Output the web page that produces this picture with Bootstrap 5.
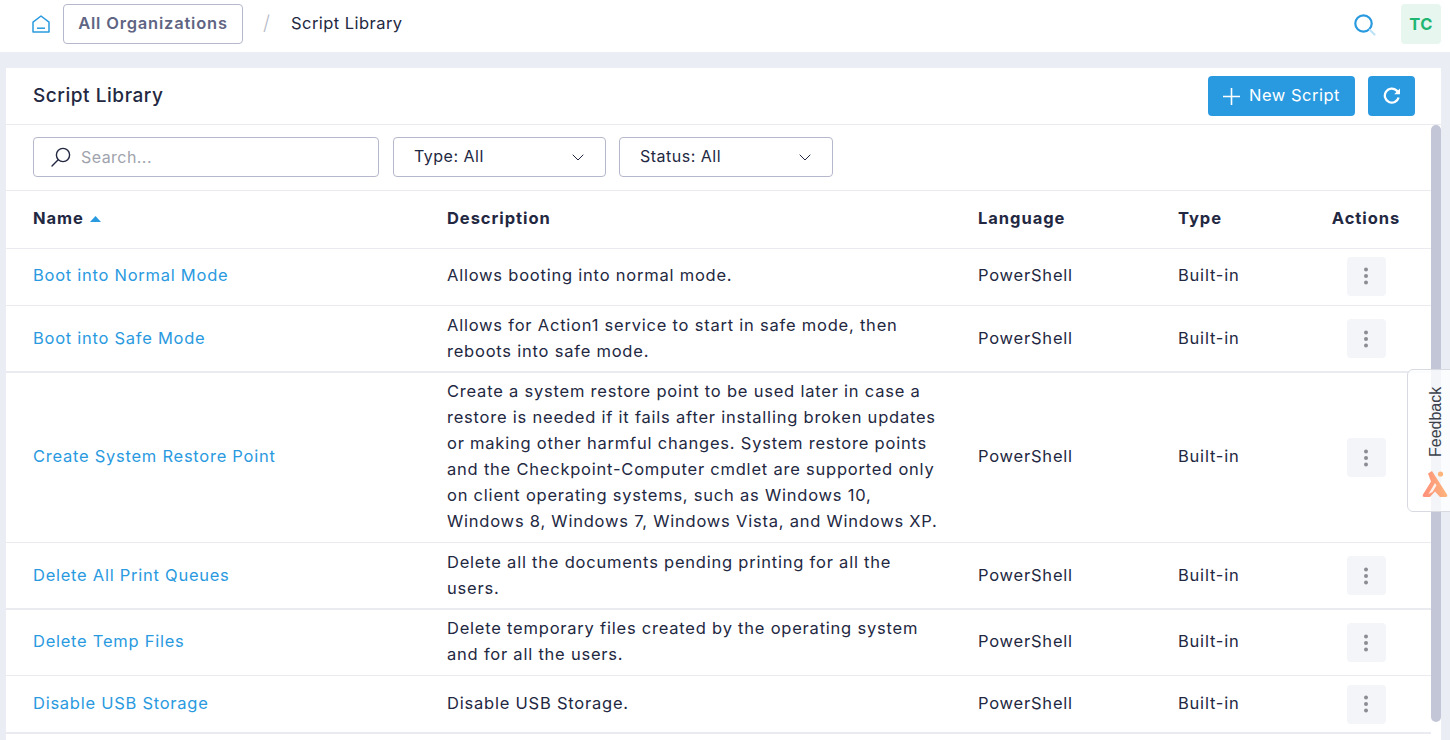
<!DOCTYPE html>
<html lang="en">
<head>
<meta charset="utf-8">
<title>Script Library</title>
<link href="https://cdn.jsdelivr.net/npm/bootstrap@5.3.0/dist/css/bootstrap.min.css" rel="stylesheet">
<style>
html,body{height:740px;overflow:hidden}
body{background:#eaedf3;font-family:Inter,"Liberation Sans",sans-serif;font-size:15.5px;color:#232842;position:relative}
.topbar{height:52px;background:#fff;padding:4px 9px 8px 32px}
.org-box{width:180px;height:40px;border:1px solid #b5b8cc;border-radius:4px;color:#5f6583;font-weight:600;font-size:16.5px;background:#fff;margin-left:13px;letter-spacing:.8px;padding-bottom:2px}
.crumb-sep{color:#b9bcc8;font-size:20px;margin:0 21px 0 20px;font-weight:300;padding-bottom:2px}
.crumb-now{font-size:16.5px;letter-spacing:.45px;padding-bottom:2px}
.avatar-box{width:40px;height:40px;border-radius:4px;background:#e7f6ee;color:#1fb573;font-weight:700;font-size:16.5px;margin-left:25px;letter-spacing:.5px}
.panel{margin:16px 9px 0 6px;background:#fff;height:672px;display:flex;flex-direction:column;position:relative}
.panel-head{height:57px;border-bottom:1px solid #e9ebf0;padding:8px 26px 8px 27px}
.panel-title{font-size:19px;font-weight:500;margin:0;letter-spacing:.55px}
.blue-btn{height:40px;background:#2a9ae0;border:0;border-radius:4px;color:#fff;font-size:16.5px;display:inline-flex;align-items:center;justify-content:center;padding:0;letter-spacing:.5px}
.blue-btn:hover{background:#2a9ae0;color:#fff}
.new-btn{width:147px;gap:9px;margin-right:13px;padding-bottom:2px}
.new-btn svg{margin-top:2px}
.refresh-btn{width:47px}
.scroller{flex:1;overflow-y:hidden;min-height:0}
.thumb-bar{position:absolute;left:1425px;top:57px;width:10px;height:597px;background:#c3c6d7;border-radius:5px;z-index:2}
.filters{height:66px;border-bottom:1px solid #e9ebf0;padding:12px 0 0 27px;gap:14px}
.search-box{width:346px;height:40px;border:1px solid #b5b8cc;border-radius:4px;padding-left:17px;gap:10px}
.search-box input{border:0;outline:0;padding:0;width:270px;font-size:16px;background:transparent;box-shadow:none;letter-spacing:.45px}
.search-box input::placeholder{color:#a0a3ad}
.pick-box{height:40px;border:1px solid #b5b8cc;border-radius:4px;padding:0 21px 2px 20px;font-size:16px;color:#232842;background:#fff;display:flex;align-items:center;justify-content:space-between;letter-spacing:.5px}
.pick-box svg{margin-top:2px}
.pick-type{width:213px}
.pick-status{width:214px;margin-left:-1px}
.data-grid{table-layout:fixed;width:1425px;border-collapse:separate;border-spacing:0;margin:0;--bs-table-color:#232842}
.data-grid th,.data-grid td{border-bottom:1px solid #e9ebf0;padding:0 0 3px;vertical-align:middle;line-height:26px;font-size:16.5px;letter-spacing:.78px;box-shadow:none}
.data-grid th{font-weight:700;height:58px;letter-spacing:.95px;padding-bottom:4px}
.data-grid .first-cell{padding-left:27px}
.data-grid .act-cell{text-align:center;padding:0 5px 0 0}
.data-grid th.act-cell{padding-bottom:4px}
.data-grid .heavy td{border-bottom-width:2px}
.h57{height:57px}.h67{height:67px}.h170{height:170px}.h66{height:66px}.h58{height:58px}
.data-grid .h57 td{padding-bottom:5px}
.data-grid .h57 td.act-cell{padding-bottom:2px}
.data-grid .h67 td{padding-bottom:1px}
.data-grid .h67 td.act-cell{padding-bottom:0}
.data-grid a{color:#2a9ae0;text-decoration:none;letter-spacing:.74px}
.name-caret{margin-left:1px}
.dots-btn{width:39px;height:39px;background:#f3f5f8;border:0;border-radius:4px;padding:0;display:inline-flex;align-items:center;justify-content:center;vertical-align:middle}
.tail{height:24px}
.feedback-tab{position:absolute;left:1407px;top:369px;width:60px;height:143px;background:rgba(255,255,255,.82);border:1px solid #d8dae1;border-radius:6px 0 0 6px;z-index:5}
.feedback-text{position:absolute;left:17px;top:13px;height:74px;writing-mode:vertical-rl;transform:rotate(180deg);font-family:"Liberation Sans",sans-serif;font-size:16px;line-height:22px;color:#3b3f4a;text-align:left}
.feedback-logo{position:absolute;left:14px;top:100px}
</style>
</head>
<body>
<div class="topbar d-flex align-items-center">
  <svg width="18" height="18" viewBox="0 0 18 18" fill="none" stroke="#2a9ae0" stroke-width="1.5"><path d="M1 7.2 9 1l8 6.2V17H1z" stroke-linejoin="round"/><path d="M5 13.2h8"/></svg>
  <div class="org-box d-flex align-items-center justify-content-center">All Organizations</div>
  <span class="crumb-sep">/</span>
  <span class="crumb-now">Script Library</span>
  <div class="ms-auto d-flex align-items-center">
    <svg width="23" height="23" viewBox="0 0 23 23" fill="none"><circle cx="10.5" cy="10.5" r="8.2" stroke="#2a9ae0" stroke-width="2.2"/><path d="m17 17 4.5 4.5" stroke="#bfe2f7" stroke-width="2.2" stroke-linecap="round"/></svg>
    <div class="avatar-box d-flex align-items-center justify-content-center">TC</div>
  </div>
</div>
<div class="panel">
  <div class="panel-head d-flex align-items-center">
    <h1 class="panel-title me-auto">Script Library</h1>
    <button class="btn blue-btn new-btn" type="button"><svg width="17" height="17" viewBox="0 0 17 17" stroke="#fff" stroke-width="1.6"><path d="M8.5 0v17M0 8.5h17"/></svg>New Script</button>
    <button class="btn blue-btn refresh-btn" type="button" aria-label="Refresh"><svg width="18" height="18" viewBox="0 0 18 18" fill="none" stroke="#fff" stroke-width="2.300"><path d="M15.600 10.500A7 7 0 1 1 13.700 3.600L16 6"/><path d="M17 1.500v5.800h-5.800z" fill="#fff" stroke="none"/></svg></button>
  </div>
  <div class="scroller">
    <div class="filters d-flex">
      <div class="search-box d-flex align-items-center">
        <svg width="20" height="20" viewBox="0 0 20 20" fill="none" stroke="#232842" stroke-width="1.4"><circle cx="12" cy="8" r="6.6"/><path d="M7.2 12.8 1 19" stroke-linecap="round"/></svg>
        <input type="text" placeholder="Search..." aria-label="Search">
      </div>
      <button class="pick-box pick-type" type="button">Type: All<svg width="12" height="7" viewBox="0 0 12 7" fill="none" stroke="#232842" stroke-width="1"><path d="m.7.7 5.3 5.3L11.3.7"/></svg></button>
      <button class="pick-box pick-status" type="button">Status: All<svg width="12" height="7" viewBox="0 0 12 7" fill="none" stroke="#232842" stroke-width="1"><path d="m.7.7 5.3 5.3L11.3.7"/></svg></button>
    </div>
    <table class="table data-grid">
      <colgroup><col style="width:441px"><col style="width:531px"><col style="width:200px"><col style="width:128px"><col style="width:125px"></colgroup>
      <thead><tr>
        <th class="first-cell">Name <svg width="11" height="6" viewBox="0 0 11 6" class="align-middle name-caret"><path d="M5.5 0 11 6H0z" fill="#2a9ae0"/></svg></th>
        <th>Description</th><th>Language</th><th>Type</th><th class="act-cell">Actions</th>
      </tr></thead>
      <tbody>
        <tr class="h57"><td class="first-cell"><a href="#">Boot into Normal Mode</a></td><td>Allows booting into normal mode.</td><td>PowerShell</td><td>Built-in</td><td class="act-cell"><button class="dots-btn" aria-label="Actions"><svg width="4" height="18" viewBox="0 0 4 18" fill="#8c8d94"><circle cx="2" cy="2.5" r="2"/><circle cx="2" cy="9" r="2"/><circle cx="2" cy="15.5" r="2"/></svg></button></td></tr>
        <tr class="h67 heavy"><td class="first-cell"><a href="#">Boot into Safe Mode</a></td><td>Allows for Action1 service to start in safe mode, then<br>reboots into safe mode.</td><td>PowerShell</td><td>Built-in</td><td class="act-cell"><button class="dots-btn" aria-label="Actions"><svg width="4" height="18" viewBox="0 0 4 18" fill="#8c8d94"><circle cx="2" cy="2.5" r="2"/><circle cx="2" cy="9" r="2"/><circle cx="2" cy="15.5" r="2"/></svg></button></td></tr>
        <tr class="h170"><td class="first-cell"><a href="#">Create System Restore Point</a></td><td>Create a system restore point to be used later in case a<br>restore is needed if it fails after installing broken updates<br>or making other harmful changes. System restore points<br>and the Checkpoint-Computer cmdlet are supported only<br>on client operating systems, such as Windows 10,<br>Windows 8, Windows 7, Windows Vista, and Windows XP.</td><td>PowerShell</td><td>Built-in</td><td class="act-cell"><button class="dots-btn" aria-label="Actions"><svg width="4" height="18" viewBox="0 0 4 18" fill="#8c8d94"><circle cx="2" cy="2.5" r="2"/><circle cx="2" cy="9" r="2"/><circle cx="2" cy="15.5" r="2"/></svg></button></td></tr>
        <tr class="h67 heavy"><td class="first-cell"><a href="#">Delete All Print Queues</a></td><td>Delete all the documents pending printing for all the<br>users.</td><td>PowerShell</td><td>Built-in</td><td class="act-cell"><button class="dots-btn" aria-label="Actions"><svg width="4" height="18" viewBox="0 0 4 18" fill="#8c8d94"><circle cx="2" cy="2.5" r="2"/><circle cx="2" cy="9" r="2"/><circle cx="2" cy="15.5" r="2"/></svg></button></td></tr>
        <tr class="h66"><td class="first-cell"><a href="#">Delete Temp Files</a></td><td>Delete temporary files created by the operating system<br>and for all the users.</td><td>PowerShell</td><td>Built-in</td><td class="act-cell"><button class="dots-btn" aria-label="Actions"><svg width="4" height="18" viewBox="0 0 4 18" fill="#8c8d94"><circle cx="2" cy="2.5" r="2"/><circle cx="2" cy="9" r="2"/><circle cx="2" cy="15.5" r="2"/></svg></button></td></tr>
        <tr class="h58 heavy"><td class="first-cell"><a href="#">Disable USB Storage</a></td><td>Disable USB Storage.</td><td>PowerShell</td><td>Built-in</td><td class="act-cell"><button class="dots-btn" aria-label="Actions"><svg width="4" height="18" viewBox="0 0 4 18" fill="#8c8d94"><circle cx="2" cy="2.5" r="2"/><circle cx="2" cy="9" r="2"/><circle cx="2" cy="15.5" r="2"/></svg></button></td></tr>
      </tbody>
    </table>
    <div class="tail"></div>
  </div>
  <div class="thumb-bar"></div>
</div>
<div class="feedback-tab">
  <span class="feedback-text">Feedback</span>
  <svg class="feedback-logo" width="26" height="28" viewBox="0 0 26 28"><defs><linearGradient id="fg" x1="0" y1="0" x2="1" y2="0"><stop offset="0" stop-color="#ff8f7a"/><stop offset="1" stop-color="#fdb57c"/></linearGradient></defs><path d="M6 3.500 10 1l15 23.500q1 2.500-1.500 2.500H18l-5-5.500L8 27H2.500Q0 27 1 24.500L9 11.500z" fill="url(#fg)"/><path d="M6.500 24 13 13l1.500 2.500L10.500 22z" fill="#fff" opacity=".85"/><circle cx="18.500" cy="4" r="2.600" fill="#fdb57c"/></svg>
</div>
<script src="https://cdn.jsdelivr.net/npm/bootstrap@5.3.0/dist/js/bootstrap.bundle.min.js"></script>
</body>
</html>
